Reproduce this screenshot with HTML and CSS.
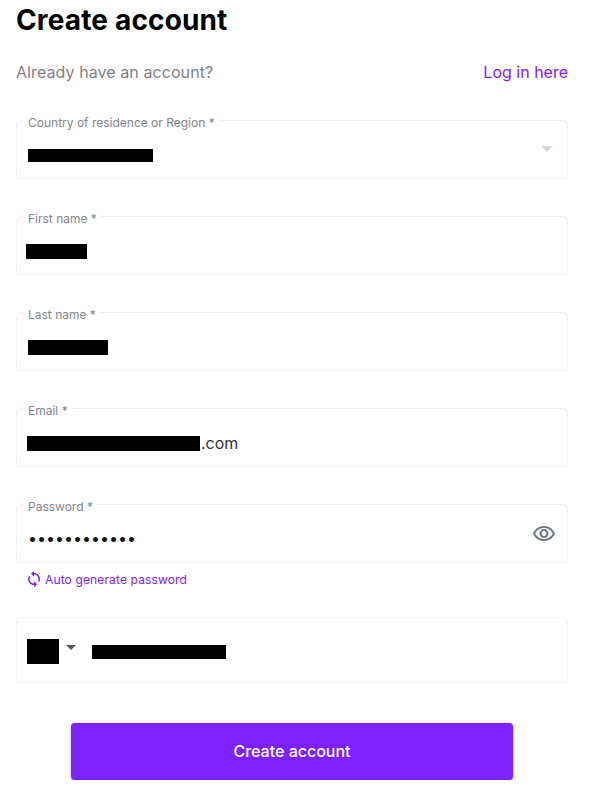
FILE: index.html
```html
<!DOCTYPE html>
<html lang="en">
<head>
    <meta charset="UTF-8">
    <meta name="viewport" content="width=device-width, initial-scale=1.0">
    <title>Create account</title>
    <link rel="stylesheet" href="styles.css">
</head>
<body>

<div class="container">
    <h1>Create account</h1>

    <div class="login-row">
        <span class="login-text">Already have an account?</span>
        <a class="login-link" href="#">Log in here</a>
    </div>

    <div class="field">
        <label>Country of residence or Region *</label>
        <span class="redacted redacted-country"></span>
        <span class="select-arrow"></span>
    </div>

    <div class="field">
        <label>First name *</label>
        <span class="redacted redacted-first"></span>
    </div>

    <div class="field">
        <label>Last name *</label>
        <span class="redacted redacted-last"></span>
    </div>

    <div class="field">
        <label>Email *</label>
        <span class="redacted redacted-email"></span>
        <span class="field-value">.com</span>
    </div>

    <div class="field">
        <label>Password *</label>
        <span class="password-dots">••••••••••••</span>
        <svg class="eye-icon" viewBox="0 0 24 24" width="24" height="24">
            <path d="M12 6c3.79 0 7.17 2.13 8.82 5.5C19.17 14.87 15.79 17 12 17s-7.17-2.13-8.82-5.5C4.83 8.13 8.21 6 12 6m0-2C7 4 2.73 7.11 1 11.5 2.73 15.89 7 19 12 19s9.27-3.11 11-7.5C21.27 7.11 17 4 12 4zm0 5c1.38 0 2.5 1.12 2.5 2.5S13.38 14 12 14s-2.5-1.12-2.5-2.5S10.62 9 12 9m0-2c-2.48 0-4.5 2.02-4.5 4.5S9.52 16 12 16s4.5-2.02 4.5-4.5S14.48 7 12 7z"/>
        </svg>
    </div>

    <a class="generate-link" href="#">
        <svg class="sync-icon" viewBox="0 0 24 24" width="18" height="18">
            <path d="M12 4V1L8 5l4 4V6c3.31 0 6 2.69 6 6 0 1.01-.25 1.97-.7 2.8l1.46 1.46C19.54 15.03 20 13.57 20 12c0-4.42-3.58-8-8-8zm0 14c-3.31 0-6-2.69-6-6 0-1.01.25-1.97.7-2.8L5.24 7.74C4.46 8.97 4 10.43 4 12c0 4.42 3.58 8 8 8v3l4-4-4-4v3z"/>
        </svg>
        Auto generate password
    </a>

    <div class="phone-field">
        <span class="redacted redacted-flag"></span>
        <span class="phone-arrow"></span>
        <span class="redacted redacted-phone"></span>
    </div>

    <button class="submit-button">Create account</button>
</div>

</body>
</html>
```

FILE: styles.css
```css
body {
    margin: 0;
    font-family: Inter, Arial, sans-serif;
    background-color: #fff;
}

.container {
    width: 552px;
    margin-left: 16px;
}

h1 {
    margin: 0;
    height: 41px;
    font-size: 28px;
    line-height: 41px;
    font-weight: 700;
    letter-spacing: 0.15px;
    color: #000;
}

.login-row {
    display: flex;
    justify-content: space-between;
    align-items: center;
    height: 20px;
    margin-top: 21px;
    margin-bottom: 38px;
    font-size: 16px;
}

.login-text {
    letter-spacing: 0.08px;
    color: #7f7f86;
}

.login-link {
    color: #7f20ff;
    text-decoration: none;
}

.field {
    position: relative;
    display: flex;
    align-items: center;
    box-sizing: border-box;
    height: 59px;
    margin-bottom: 37px;
    padding: 12px 12px 0 11px;
    border: 1px solid #eeeef5;
    border-radius: 6px;
}

.field label {
    position: absolute;
    top: -6px;
    left: 6px;
    padding: 0 3px 0 5px;
    background-color: #fff;
    font-size: 12px;
    line-height: 15px;
    color: #85858c;
}

.redacted {
    display: block;
    flex-shrink: 0;
    background-color: #000;
}

.redacted-country {
    width: 125px;
    height: 13px;
}

.redacted-first {
    width: 61px;
    height: 15px;
    margin-left: -2px;
}

.redacted-last {
    width: 80px;
    height: 15px;
}

.redacted-email {
    width: 173px;
    height: 15px;
    margin-left: -1px;
}

.field-value {
    margin-left: 1px;
    margin-top: -2px;
    font-size: 16px;
    color: #333;
}

.select-arrow {
    margin-left: auto;
    margin-right: 2px;
    margin-top: -13px;
    border-left: 6px solid transparent;
    border-right: 6px solid transparent;
    border-top: 6px solid #d6d6da;
}

.password-dots {
    margin-top: -3px;
    font-size: 16px;
    color: #10131a;
}

.eye-icon {
    margin-left: auto;
    margin-right: -1px;
    margin-top: -12px;
    fill: #6f7681;
}

.generate-link {
    display: flex;
    align-items: center;
    gap: 2px;
    height: 16px;
    margin-top: -29px;
    margin-left: 9px;
    font-size: 12px;
    letter-spacing: 0.14px;
    color: #7f20ff;
    text-decoration: none;
}

.sync-icon {
    fill: #7f20ff;
}

.phone-field {
    display: flex;
    align-items: center;
    box-sizing: border-box;
    height: 66px;
    margin-top: 30px;
    padding-top: 3px;
    padding-left: 10px;
    border: 1px solid #f0f0f4;
    border-radius: 6px;
}

.redacted-flag {
    width: 32px;
    height: 25px;
}

.phone-arrow {
    margin-left: 7px;
    margin-top: -8px;
    border-left: 5px solid transparent;
    border-right: 5px solid transparent;
    border-top: 5px solid #55555a;
}

.redacted-phone {
    width: 134px;
    height: 14px;
    margin-left: 16px;
}

.submit-button {
    display: block;
    width: 442px;
    height: 57px;
    margin: 40px auto 0;
    padding-bottom: 2px;
    border: none;
    border-radius: 4px;
    background-color: #7f20ff;
    box-shadow: 0 1px 3px rgba(0, 0, 0, 0.35);
    font-family: Inter, Arial, sans-serif;
    font-size: 16px;
    font-weight: 500;
    color: #fff;
    cursor: pointer;
}
```
